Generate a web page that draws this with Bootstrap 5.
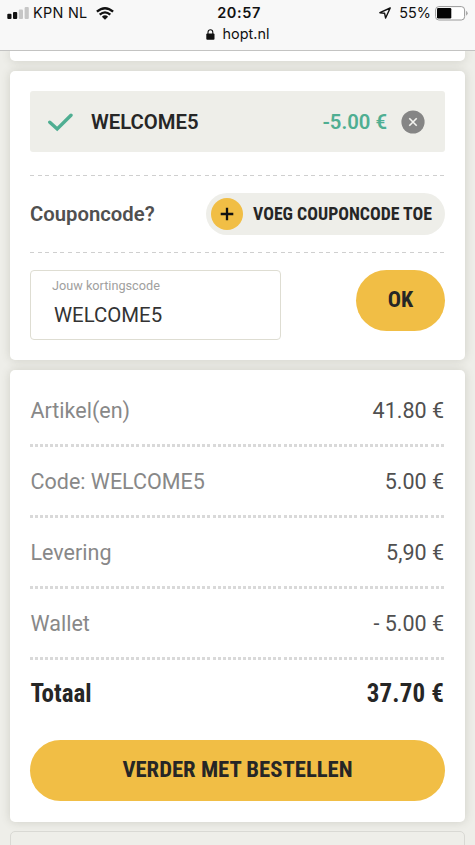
<!DOCTYPE html>
<html lang="nl">
<head>
<meta charset="utf-8">
<meta name="viewport" content="width=device-width, initial-scale=1">
<title>hopt.nl</title>
<link href="https://cdn.jsdelivr.net/npm/bootstrap@5.3.0/dist/css/bootstrap.min.css" rel="stylesheet">
<style>
body{background:#eeeee9;font-family:Roboto,"Liberation Sans",sans-serif;color:#262626;width:475px;height:845px;overflow:hidden;line-height:1}
.chrome{height:51px;background:#f8f8f8;border-bottom:1px solid #c3c3c2;font-family:Inter,"Liberation Sans",sans-serif;font-size:14.4px;color:#111;position:relative;z-index:2}
.status-row{height:26px;display:grid;grid-template-columns:1fr auto 1fr;padding:0 7px}
.carrier{letter-spacing:.3px}
.clock{font-size:14.5px;font-weight:600;letter-spacing:.6px;padding-left:3px}
.url-row{height:17px;font-size:14.4px}
.panel{margin:0 10px;background:#fff;border-radius:5px;box-shadow:0 0 10px rgba(80,80,60,.2)}
.panel-prev{height:10px;border-radius:0 0 5px 5px}
.panel-coupon{margin-top:10px;height:289px;padding:20px 20px 0}
.panel-total{margin-top:10px;height:451.5px;padding:6px 20px 0}
.panel-next{margin:9.5px 10px 0;height:40px;border:1px solid #d9d9d4;border-radius:5px}
.applied{height:61px;background:#eeeee9;border-radius:3px;padding:0 20px 0 17px}
.applied .t20{padding-top:2px}
.applied-code{margin-left:18px}
.applied-value{margin-right:14px}
.dashes{height:1px;background:repeating-linear-gradient(90deg,#cfcfcf 0 4px,transparent 4px 7.6px)}
.dashes-top{margin-top:23px}
.dots{height:2.5px;margin-bottom:.5px;background:repeating-linear-gradient(90deg,#d9d9d9 0 3px,transparent 3px 5.07px)}
.t20{font-size:20.3px;font-weight:600}
.green{color:#4fae92}
.cond{font-family:"Roboto Condensed",Roboto,sans-serif;font-stretch:condensed;font-weight:700;white-space:nowrap}
.ask{height:76px}
.addbtn{height:41.5px;width:239px;border-radius:21px;background:#eeeee9;padding-left:5px;border:0;color:#262626}
.addbtn .cond{font-size:17.8px;margin-left:10px}
.entry{margin-top:17px}
.code-field{width:251px;height:69.5px;border:1px solid #deddd2;border-radius:4px;padding:9px 0 0 21px}
.code-field label{font-size:12.7px;color:#a0a09e;display:block}
.code-value{font-size:20.4px;color:#333;padding-left:2px;margin-top:12px}
.yellow{background:#f1be45;border:0;border-radius:31px;height:61px;color:#262626;padding-bottom:2px}
.ok{width:89px;font-size:22px}
.order{font-size:21.5px}
.line{height:68px;color:#888;padding:2px 1px 0 .5px}
.amount{color:#505050}
.sum{height:67px;font-size:25px;padding:0 1px 0 .5px}
.sum-value{letter-spacing:.15px}
.proceed{font-size:22.7px;margin-top:13px}
</style>
</head>
<body>
<header class="chrome">
  <div class="status-row align-items-center">
    <div class="d-flex align-items-center">
      <svg width="22" height="13" viewBox="0 0 22 13"><g fill="#111"><rect x=".3" y="6.7" width="4.2" height="5.2" rx="1"/><rect x="6" y="5" width="4.2" height="6.9" rx="1"/></g><g fill="#c6c6c6"><rect x="11.8" y="2.6" width="4.2" height="9.3" rx="1"/><rect x="17.6" y="0" width="4.2" height="11.9" rx="1"/></g></svg>
      <span class="carrier ms-1">KPN NL</span>
      <svg class="ms-2" width="18" height="13" viewBox="0 0 18 13"><g fill="none" stroke="#111" stroke-width="2.3"><path d="M.9 4.7Q9-2.3 17.1 4.7"/><path d="M3.7 7.7Q9 3 14.3 7.7"/></g><path d="M5.9 9.7Q9 7 12.1 9.7L9 12.8Z" fill="#111"/></svg>
    </div>
    <span class="clock">20:57</span>
    <div class="d-flex align-items-center justify-content-end">
      <svg width="12" height="12" viewBox="0 0 12 12"><path d="M11.2 1L.9 5.7L5.6 6.3L6.6 11Z" fill="none" stroke="#111" stroke-width="1.4" stroke-linejoin="round"/></svg>
      <span class="ms-2 me-1">55%</span>
      <svg width="33" height="15" viewBox="0 0 33 15"><rect x=".6" y=".6" width="29" height="13.4" rx="3.3" fill="#fff" stroke="#999"/><rect x="2" y="2" width="14.3" height="10.5" rx="1.2" fill="#050505"/><path d="M31.2 4.8Q34 7.3 31.2 9.8Z" fill="#999"/></svg>
    </div>
  </div>
  <div class="url-row d-flex align-items-center justify-content-center">
    <svg width="9" height="11" viewBox="0 0 9 11"><rect x=".3" y="4.6" width="8.2" height="6.2" rx="1" fill="#111"/><path d="M2 5V3.2a2.4 2.5 0 0 1 4.8 0V5" fill="none" stroke="#111" stroke-width="1.1"/></svg>
    <span class="ms-2">hopt.nl</span>
  </div>
</header>
<main>
  <div class="panel panel-prev"></div>
  <section class="panel panel-coupon">
    <div class="applied d-flex align-items-center">
      <svg width="26" height="20" viewBox="0 0 26 20"><path d="M2.8 10.2L10.2 17L24 3.3" fill="none" stroke="#4fae92" stroke-width="3.4" stroke-linecap="round"/></svg>
      <span class="t20 applied-code">WELCOME5</span>
      <span class="t20 green ms-auto applied-value">-5.00 €</span>
      <svg width="24" height="24" viewBox="0 0 24 24"><circle cx="12" cy="12" r="11.6" fill="#858585"/><path d="M8.3 8.3L15.7 15.7M15.7 8.3L8.3 15.7" stroke="#f4f4f0" stroke-width="1.6"/></svg>
    </div>
    <div class="dashes dashes-top"></div>
    <div class="ask d-flex align-items-center justify-content-between">
      <span class="t20 amount">Couponcode?</span>
      <button type="button" class="addbtn d-flex align-items-center">
        <svg width="32" height="32" viewBox="0 0 32 32"><circle cx="16" cy="16" r="16" fill="#f1be45"/><path d="M16 9.7V22.3M9.7 16H22.3" stroke="#111" stroke-width="2.3"/></svg>
        <span class="cond">VOEG COUPONCODE TOE</span>
      </button>
    </div>
    <div class="dashes"></div>
    <div class="entry d-flex justify-content-between align-items-start">
      <div class="code-field"><label>Jouw kortingscode</label><div class="code-value">WELCOME5</div></div>
      <button type="button" class="yellow ok cond">OK</button>
    </div>
  </section>
  <section class="panel panel-total order">
    <div class="line d-flex align-items-center justify-content-between"><span>Artikel(en)</span><span class="amount">41.80 €</span></div><div class="dots"></div>
    <div class="line d-flex align-items-center justify-content-between"><span>Code: WELCOME5</span><span class="amount">5.00 €</span></div><div class="dots"></div>
    <div class="line d-flex align-items-center justify-content-between"><span>Levering</span><span class="amount">5,90 €</span></div><div class="dots"></div>
    <div class="line d-flex align-items-center justify-content-between"><span>Wallet</span><span class="amount">- 5.00 €</span></div><div class="dots"></div>
    <div class="sum cond d-flex align-items-center justify-content-between"><span>Totaal</span><span class="sum-value">37.70 €</span></div>
    <button type="button" class="yellow proceed cond w-100">VERDER MET BESTELLEN</button>
  </section>
  <div class="panel-next"></div>
</main>
<script src="https://cdn.jsdelivr.net/npm/bootstrap@5.3.0/dist/js/bootstrap.bundle.min.js"></script>
</body>
</html>
